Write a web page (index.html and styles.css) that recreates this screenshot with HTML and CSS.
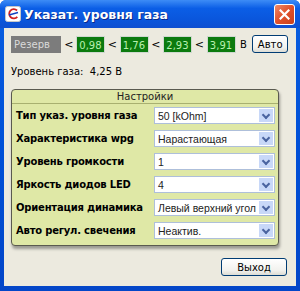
FILE: index.html
```html
<!DOCTYPE html>
<html lang="ru">
<head>
    <meta charset="UTF-8">
    <title>Указат. уровня газа</title>
    <link rel="stylesheet" href="styles.css">
</head>
<body>
    <div class="window">
        <div class="titlebar">
            <svg class="app-icon" width="16" height="16" viewBox="0 0 16 16">
                <rect x="0.5" y="0.5" width="15" height="15" rx="2" fill="#ffffff" stroke="#c8c8c8"/>
                <path d="M12 4.5 A4.6 4.6 0 1 0 12.3 10.8" fill="none" stroke="#d02020" stroke-width="1.8"/>
                <path d="M4 9 L13 6.5" stroke="#1040c0" stroke-width="1.4"/>
            </svg>
            <span class="title">Указат. уровня газа</span>
            <button class="close">
                <svg width="11" height="11" viewBox="0 0 11 11">
                    <path d="M1.5 1.5 L9.5 9.5 M9.5 1.5 L1.5 9.5" stroke="#fff" stroke-width="2.2" stroke-linecap="square"/>
                </svg>
            </button>
        </div>
        <div class="client">
            <div class="levels">
                <span class="reserve">Резерв</span>
                <span class="lt">&lt;</span>
                <span class="level">0,98</span>
                <span class="lt">&lt;</span>
                <span class="level">1,76</span>
                <span class="lt">&lt;</span>
                <span class="level">2,93</span>
                <span class="lt">&lt;</span>
                <span class="level">3,91</span>
                <span class="unit">В</span>
                <button class="btn auto">Авто</button>
            </div>
            <div class="gas">Уровень газа:&nbsp; 4,25 В</div>
            <div class="group">
                <div class="group-head">Настройки</div>
                <div class="row">
                    <span class="label">Тип указ. уровня газа</span>
                    <div class="select"><span>50 [kOhm]</span><i></i></div>
                </div>
                <div class="row">
                    <span class="label">Характеристика wpg</span>
                    <div class="select"><span>Нарастающая</span><i></i></div>
                </div>
                <div class="row">
                    <span class="label">Уровень громкости</span>
                    <div class="select"><span>1</span><i></i></div>
                </div>
                <div class="row">
                    <span class="label">Яркость диодов LED</span>
                    <div class="select"><span>4</span><i></i></div>
                </div>
                <div class="row">
                    <span class="label">Ориентация динамика</span>
                    <div class="select"><span>Левый верхний угол</span><i></i></div>
                </div>
                <div class="row">
                    <span class="label">Авто регул. свечения</span>
                    <div class="select"><span>Неактив.</span><i></i></div>
                </div>
            </div>
            <div class="footer">
                <button class="btn exit">Выход</button>
            </div>
        </div>
    </div>
</body>
</html>
```

FILE: styles.css
```css
body {
    margin: 0;
    padding: 0;
    font-family: "DejaVu Sans", sans-serif;
    font-size: 10px;
    color: #000;
}

.window {
    width: 300px;
    height: 291px;
    box-sizing: border-box;
    background: linear-gradient(#0a5fe0, #0050d8 50%, #0346c8);
    border-radius: 6px 6px 0 0;
    padding: 0 4px 5px 4px;
    display: flex;
    flex-direction: column;
}

.titlebar {
    height: 28px;
    display: flex;
    align-items: center;
    background: linear-gradient(#3d8cf6, #0b5ee6 30%, #0a56dc 70%, #0e4fd0);
    margin: 0 -4px;
    padding: 0 5px 0 5px;
    border-radius: 6px 6px 0 0;
}

.app-icon {
    flex: none;
}

.title {
    margin-left: 3px;
    color: #fff;
    font-family: "DejaVu Sans", sans-serif;
    font-weight: bold;
    font-size: 12.5px;
    text-shadow: 1px 1px 0 #0a2a8a;
    flex: 1;
}

.close {
    width: 21px;
    height: 21px;
    padding: 0;
    border: 1px solid #fff;
    border-radius: 3px;
    background: linear-gradient(135deg, #f08a68, #e0502a 50%, #c8401c);
    display: flex;
    align-items: center;
    justify-content: center;
}

.client {
    flex: 1;
    background-color: #eceadf;
    display: flex;
    flex-direction: column;
    padding: 7px 8px 0 7px;
}

.levels {
    display: flex;
    align-items: center;
    height: 18px;
}

.reserve {
    width: 51px;
    height: 17px;
    line-height: 17px;
    background-color: #7c7c7c;
    color: #dadada;
    padding-left: 3px;
    box-sizing: border-box;
}

.lt {
    width: 15px;
    text-align: center;
    font-size: 11px;
}

.level {
    width: 29px;
    height: 17px;
    line-height: 17px;
    box-sizing: border-box;
    background-color: #0b7a0e;
    color: #b8f0b0;
    padding-left: 2px;
    border: 1px solid #cfd8cf;
}

.unit {
    width: 16px;
    text-align: center;
}

.btn {
    font-family: "DejaVu Sans", sans-serif;
    font-size: 10px;
    color: #000;
    background: linear-gradient(#ffffff, #f2f2ee 70%, #dcdcd4);
    border: 1px solid #003c74;
    border-radius: 3px;
    padding: 0;
}

.auto {
    width: 36px;
    height: 18px;
    margin-left: 1px;
}

.gas {
    margin-top: 9px;
    height: 20px;
    line-height: 20px;
}

.group {
    margin-top: 7px;
    width: 268px;
    height: 157px;
    box-sizing: border-box;
    background-color: #dfe8a6;
    border: 1px solid #5a5a50;
    border-radius: 4px;
    box-shadow: 1px 3px 3px rgba(0, 0, 0, 0.35);
    display: flex;
    flex-direction: column;
}

.group-head {
    height: 13px;
    line-height: 13px;
    text-align: center;
    font-size: 10px;
    border-bottom: 1px solid #a8b070;
    color: #222;
}

.row {
    display: flex;
    align-items: center;
    height: 23px;
    padding-left: 4px;
}

.row:first-of-type {
    margin-top: 1px;
}

.label {
    width: 138px;
    font-weight: bold;
    font-size: 10px;
    letter-spacing: -0.2px;
}

.select {
    width: 119px;
    height: 15px;
    background-color: #fff;
    border: 1px solid #aebfda;
    display: flex;
    align-items: center;
    font-family: "Liberation Sans", sans-serif;
    font-size: 10.5px;
    color: #222;
}

.select span {
    flex: 1;
    padding-left: 3px;
    white-space: nowrap;
    overflow: hidden;
}

.select i {
    width: 14px;
    height: 13px;
    margin-right: 1px;
    background: #c8d8f8;
    position: relative;
}

.select i::after {
    content: "";
    position: absolute;
    left: 4px;
    top: 3px;
    width: 4px;
    height: 4px;
    border-right: 2px solid #4a64a0;
    border-bottom: 2px solid #4a64a0;
    transform: rotate(45deg);
}

.footer {
    display: flex;
    justify-content: flex-end;
    margin-top: 12px;
}

.exit {
    width: 66px;
    height: 18px;
    margin-right: 1px;
}
```
